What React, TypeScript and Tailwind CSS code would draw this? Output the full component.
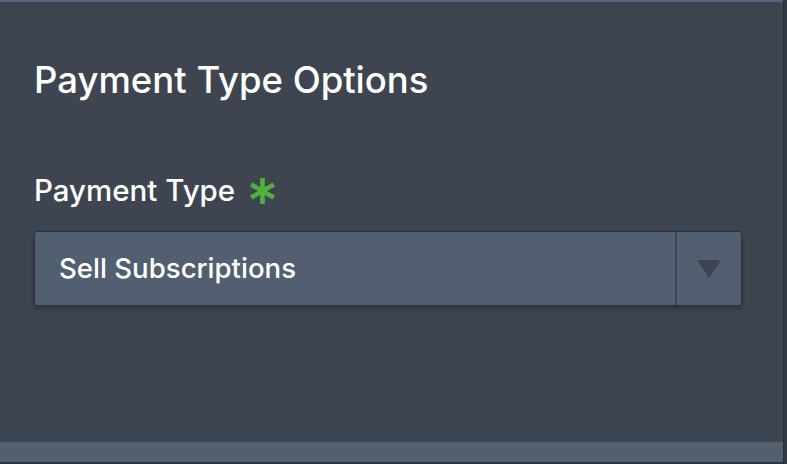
export default function App() {
  return (
    <div className="flex h-[464px] w-full bg-[#3e4551] font-['Inter','Liberation_Sans',sans-serif] text-white antialiased">
      <div className="flex flex-1 flex-col">
        <div className="h-[2px] bg-[#56637a]" />
        <main className="flex-1 px-[34px]">
          <h1 className="mt-[56px] text-[36.5px] leading-[44px] font-medium">Payment Type Options</h1>
          <label className="mt-[71px] flex items-center gap-[14px] text-[29.5px] leading-[34px] font-medium">
            Payment Type
            <svg width="27" height="26" viewBox="0 0 27 26" className="mt-[2px]">
              <g stroke="#4fb23c" strokeWidth="4.6">
                <line x1="13.5" y1="0" x2="13.5" y2="26" />
                <line x1="2.2" y1="6.5" x2="24.8" y2="19.5" />
                <line x1="2.2" y1="19.5" x2="24.8" y2="6.5" />
              </g>
            </svg>
          </label>
          <div className="mt-[24px] flex h-[75px] w-[708px] overflow-hidden rounded-[3px] border-[1.5px] border-[#2b313a] bg-[#525f70] shadow-[0_3px_4px_rgba(0,0,0,0.25)]">
            <div className="flex flex-1 items-center pl-[24px] text-[27.6px] font-medium">Sell Subscriptions</div>
            <div className="w-[2px] bg-[#3e4551]" />
            <div className="flex w-[64px] items-center justify-center">
              <svg width="24" height="18" viewBox="0 0 24 18">
                <path d="M0 0 H24 L12 18 Z" fill="#3e4551" />
              </svg>
            </div>
          </div>
        </main>
        <div className="h-[20px] bg-[#525f70]" />
        <div className="h-[2px] bg-[#2e343d]" />
      </div>
      <div className="w-[4px] border-l border-[#2a2f37] bg-[#343a44]" />
    </div>
  );
}
